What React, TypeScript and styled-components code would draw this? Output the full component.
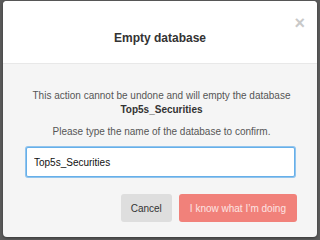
import React from "react";
import styled, { createGlobalStyle } from "styled-components";

const Global = createGlobalStyle`
  html, body { margin: 0; padding: 0; }
  body {
    width: 320px;
    height: 240px;
    background: #5b5b5b;
    font-family: "Liberation Sans", Arial, Helvetica, sans-serif;
    overflow: hidden;
  }
`;

const Backdrop = styled.div`
  width: 320px;
  height: 240px;
  box-sizing: border-box;
  padding: 1px 3px 3px 3px;
  display: flex;
`;

const Modal = styled.div`
  flex: 1;
  display: flex;
  flex-direction: column;
  border-radius: 4px;
  overflow: hidden;
  background: #f5f5f5;
  box-shadow: 0 1px 3px rgba(0, 0, 0, 0.4);
`;

const Header = styled.div`
  position: relative;
  height: 63px;
  background: #ffffff;
  border-bottom: 1px solid #e8e8e8;
  display: flex;
  align-items: center;
  justify-content: center;
  padding-top: 12px;
  box-sizing: border-box;
`;

const Title = styled.h1`
  margin: 0;
  font-size: 12px;
  font-weight: 700;
  color: #333333;
`;

const Close = styled.span`
  position: absolute;
  top: 13px;
  right: 12px;
  font-size: 18px;
  font-weight: 700;
  line-height: 18px;
  color: #c9c9c9;
`;

const Body = styled.div`
  flex: 1;
  display: flex;
  flex-direction: column;
  align-items: center;
  padding: 25px 20px 0 23px;
`;

const Text = styled.p<{ $bold?: boolean; $mt?: number }>`
  margin: ${(p) => p.$mt ?? 0}px 0 0 0;
  font-size: 10px;
  line-height: 14px;
  color: ${(p) => (p.$bold ? "#333333" : "#555555")};
  font-weight: ${(p) => (p.$bold ? 700 : 400)};
  text-align: center;
`;

const Input = styled.input`
  margin-top: 8px;
  align-self: stretch;
  margin-right: 2px;
  height: 30px;
  box-sizing: border-box;
  border: 1px solid #66afe9;
  box-shadow: 0 0 0 1px rgba(102, 175, 233, 0.7);
  border-radius: 2px;
  padding: 0 7px;
  font-family: inherit;
  font-size: 10px;
  color: #111111;
  background: #ffffff;
  outline: none;
`;

const Actions = styled.div`
  margin-top: 17px;
  align-self: stretch;
  display: flex;
  justify-content: flex-end;
  gap: 7px;
`;

const Button = styled.button<{ $danger?: boolean }>`
  height: 28px;
  border: none;
  border-radius: 3px;
  padding: 0 ${(p) => (p.$danger ? 11 : 10)}px;
  font-family: inherit;
  font-size: 10px;
  background: ${(p) => (p.$danger ? "#f1817a" : "#dedede")};
  color: ${(p) => (p.$danger ? "#fde4e2" : "#333333")};
`;

export default function App() {
  return (
    <>
      <Global />
      <Backdrop>
        <Modal>
          <Header>
            <Title>Empty database</Title>
            <Close>×</Close>
          </Header>
          <Body>
            <Text>This action cannot be undone and will empty the database</Text>
            <Text $bold>Top5s_Securities</Text>
            <Text $mt={8}>Please type the name of the database to confirm.</Text>
            <Input defaultValue="Top5s_Securities" />
            <Actions>
              <Button>Cancel</Button>
              <Button $danger>I know what I’m doing</Button>
            </Actions>
          </Body>
        </Modal>
      </Backdrop>
    </>
  );
}
